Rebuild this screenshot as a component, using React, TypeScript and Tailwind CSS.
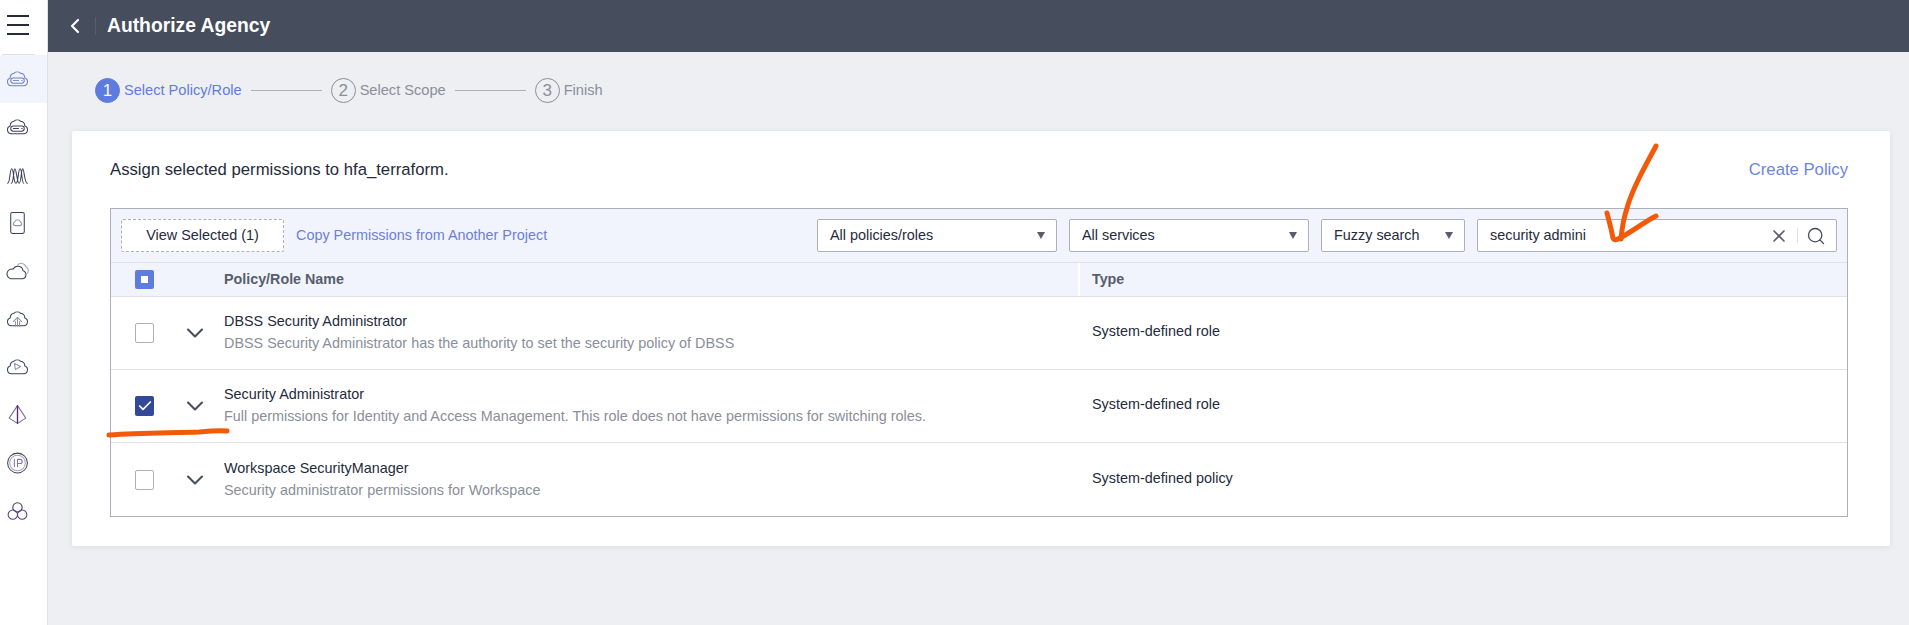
import React from 'react';
import { ChevronDown, ChevronLeft, Search, X, Check } from 'lucide-react';

const ink = '#3c4257';
const tint = '#7b8fd8';

const NavIcon: React.FC<{ children: React.ReactNode }> = ({ children }) => (
  <svg width="26" height="26" viewBox="0 0 24 24" fill="none" stroke={ink} strokeWidth="1" strokeLinecap="round" strokeLinejoin="round">
    {children}
  </svg>
);

const cloud = 'M6 18.5h12a3.8 3.8 0 0 0 1-7.4 4.6 4.6 0 0 0-4-4.6 4.8 4.8 0 0 0-6.5 0 4.6 4.6 0 0 0-3.500 4.600 3.800 3.800 0 0 0 1 7.400z';

const navIcons: React.ReactNode[] = [
  <NavIcon key="a">
    <path d={cloud} stroke="#6f7fc8" />
    <rect x="5.500" y="11" width="13" height="5" rx="2.500" stroke="#6f7fc8" />
    <path d="M8 13.500h5M16 13.500h.5" stroke={tint} />
  </NavIcon>,
  <NavIcon key="b">
    <path d={cloud} />
    <rect x="5.500" y="11" width="13" height="5" rx="2.500" />
    <path d="M8 13.500h5M16 13.500h.5" />
  </NavIcon>,
  <NavIcon key="c">
    <path d="M2.500 20c2.500 0 2-14 4-14s1.500 14 4 14 2-14 4-14 1.500 14 3.500 14M6 20c2.500 0 2-14 3.500-14s2 14 4 14 2-14 3.500-14 1.500 14 4.500 14" />
  </NavIcon>,
  <NavIcon key="d">
    <rect x="5.500" y="2" width="13" height="20" rx="1.500" />
    <path d="M9.500 14.500h5a1.800 1.800 0 0 0 .2-3.500 2.800 2.800 0 0 0-5.400 0 1.800 1.800 0 0 0 .2 3.500z" stroke="#8d93a5" />
  </NavIcon>,
  <NavIcon key="e">
    <path d="M5.500 19.500h11a4 4 0 0 0 .8-7.800 5 5 0 0 0-9.400-1.500 4.800 4.800 0 0 0-2.400 9.300z" />
    <path d="M12 6.500a4.500 4.500 0 0 1 8 1.500 4 4 0 0 1 2 5.500 4 4 0 0 1-3 2" stroke="#a5a9b8" />
  </NavIcon>,
  <NavIcon key="f">
    <path d={cloud} />
    <path d="M12 19v-7M8 14.500l4-4 4 4M10 19v-4.500M14 19v-4.500" stroke="#8d93a5" />
  </NavIcon>,
  <NavIcon key="g">
    <path d={cloud} />
    <path d="M9 8.500l6 3-5 3z" stroke="#8d93a5" />
  </NavIcon>,
  <NavIcon key="h">
    <path d="M12 3L4 15l8 5 8-5z" stroke="#7d6a9a" />
    <path d="M12 3v17" stroke="#5a2a6a" strokeWidth="1.300" />
  </NavIcon>,
  <NavIcon key="i">
    <circle cx="12" cy="12" r="9.500" />
    <circle cx="12" cy="12" r="7.500" stroke="#a5a9b8" />
    <path d="M9 8.500v7M12 15.500v-7h2.500a2 2 0 0 1 0 4H12" stroke="#8d6fb0" />
  </NavIcon>,
  <NavIcon key="j">
    <circle cx="12" cy="8.500" r="4.500" />
    <circle cx="7.500" cy="15.500" r="4.500" stroke="#5a3a7a" />
    <circle cx="16.500" cy="15.500" r="4.500" stroke="#5a3a7a" />
  </NavIcon>,
];

const rows = [
  {
    name: 'DBSS Security Administrator',
    desc: 'DBSS Security Administrator has the authority to set the security policy of DBSS',
    type: 'System-defined role',
    checked: false,
  },
  {
    name: 'Security Administrator',
    desc: 'Full permissions for Identity and Access Management. This role does not have permissions for switching roles.',
    type: 'System-defined role',
    checked: true,
  },
  {
    name: 'Workspace SecurityManager',
    desc: 'Security administrator permissions for Workspace',
    type: 'System-defined policy',
    checked: false,
  },
];

const Step: React.FC<{ n: number; label: string; active?: boolean }> = ({ n, label, active }) => (
  <div className="flex items-center gap-[4px]">
    <span
      className={
        active
          ? 'flex h-[25px] w-[25px] items-center justify-center rounded-full border border-[#5e7ce0] bg-[#5e7ce0] text-[17px] text-white'
          : 'flex h-[25px] w-[25px] items-center justify-center rounded-full border border-[#8a8e99] text-[17px] text-[#8a8e99]'
      }
    >
      {n}
    </span>
    <span className={active ? 'text-[14.600px] text-[#5e7ce0]' : 'text-[14.600px] text-[#8a8e99]'}>{label}</span>
  </div>
);

const Select: React.FC<{ label: string; width: string }> = ({ label, width }) => (
  <div className={`flex h-[33px] items-center justify-between rounded-[2px] border border-[#adb0b8] bg-white pl-[12px] pr-[11px] text-[14.400px] text-[#252b3a] ${width}`}>
    <span>{label}</span>
    <span className="h-0 w-0 border-x-[4px] border-t-[7px] border-x-transparent border-t-[#575d6c]" />
  </div>
);

const App: React.FC = () => {
  return (
    <div className="relative flex h-[625px] w-full overflow-hidden bg-[#eeeff3] font-['Liberation_Sans',Arial,sans-serif]">
      <aside className="flex w-[48px] shrink-0 flex-col border-r border-[#dfe1e6] bg-white">
        <div className="ml-[2px] flex h-[55px] w-[33px] flex-col justify-start gap-[7px] border-b border-[#dfe1e6] pl-[5px] pt-[15px]">
          <span className="h-[2px] w-[22px] bg-[#252b3a]" />
          <span className="h-[2px] w-[22px] bg-[#252b3a]" />
          <span className="h-[2px] w-[22px] bg-[#252b3a]" />
        </div>
        {navIcons.map((icon, i) => (
          <div
            key={i}
            className={i === 0 ? 'flex h-[48px] items-center justify-center bg-[#f1f4fc] pr-[17px] pl-[5px]' : 'flex h-[48px] items-center justify-center pr-[17px] pl-[5px]'}
          >
            {icon}
          </div>
        ))}
      </aside>

      <div className="flex min-w-0 flex-1 flex-col">
        <header className="flex h-[52px] shrink-0 items-center bg-[#464d5c] pl-[15px] text-white">
          <ChevronLeft size={24} strokeWidth={2.2} className="text-white" />
          <span className="ml-[8px] mr-[11px] h-[18px] w-px bg-[#575d6c]" />
          <h1 className="text-[19.300px] font-bold">Authorize Agency</h1>
        </header>

        <main className="flex flex-col pl-[24px] pr-[19px]">
          <div className="mb-[2px] flex h-[77px] items-center pl-[23px]">
            <Step n={1} label="Select Policy/Role" active />
            <span className="mx-[9px] h-px w-[71px] bg-[#adb0b8]" />
            <Step n={2} label="Select Scope" />
            <span className="mx-[9px] h-px w-[71px] bg-[#adb0b8]" />
            <Step n={3} label="Finish" />
          </div>

          <section className="rounded-[2px] bg-white pb-[29px] pl-[38px] pr-[42px] pt-[24px] shadow-[0_1px_6px_rgba(0,0,0,0.08)]">
            <div className="flex h-[40px] items-center justify-between pb-[10px]">
              <p className="text-[16.700px] text-[#252b3a]">Assign selected permissions to hfa_terraform.</p>
              <a className="text-[16.700px] text-[#6c85e0]">Create Policy</a>
            </div>
            <div className="mt-[13px] border border-[#adb0b8]">
              <div className="flex h-[53px] items-center bg-[#f1f4fc] pl-[10px] pr-[10px]">
                <button className="h-[33px] w-[163px] rounded-[2px] border border-dashed border-[#adb0b8] bg-white text-[14.400px] text-[#252b3a]">
                  View Selected (1)
                </button>
                <a className="ml-[12px] text-[14.400px] text-[#6c7fd8]">Copy Permissions from Another Project</a>
                <div className="ml-auto flex items-center gap-[12px]">
                  <Select label="All policies/roles" width="w-[240px]" />
                  <Select label="All services" width="w-[240px]" />
                  <Select label="Fuzzy search" width="w-[144px]" />
                  <div className="flex h-[33px] w-[360px] items-center rounded-[2px] border border-[#adb0b8] bg-white pl-[12px] pr-[10px] text-[14.400px] text-[#252b3a]">
                    <span className="flex-1">security admini</span>
                    <X size={20} strokeWidth={2} className="text-[#575d6c]" />
                    <span className="mx-[8px] h-[15px] w-px bg-[#dfe1e6]" />
                    <Search size={20} strokeWidth={1.6} className="text-[#464d5c]" />
                  </div>
                </div>
              </div>

              <div className="flex h-[35px] items-center border-y border-[#dfe1e6] bg-[#f1f4fc] text-[14.300px] font-bold text-[#575d6c]">
                <div className="flex w-[93px] shrink-0 pl-[24px]">
                  <span className="flex h-[19px] w-[19px] items-center justify-center rounded-[2px] bg-[#5e7ce0]">
                    <span className="h-[7px] w-[7px] bg-white" />
                  </span>
                </div>
                <div className="flex h-full flex-1 items-center border-r-2 border-white pl-[20px]">Policy/Role Name</div>
                <div className="w-[767px] shrink-0 pl-[12px]">Type</div>
              </div>

              {rows.map((row, i) => (
                <div key={row.name} className={i < rows.length - 1 ? 'flex h-[73px] items-center border-b border-[#dfe1e6]' : 'flex h-[73px] items-center'}>
                  <div className="flex w-[93px] shrink-0 items-center pl-[24px]">
                    <span className="flex h-[20px] w-[19px] shrink-0 items-center justify-center">
                      {row.checked ? (
                        <span className="flex h-[20px] w-[19px] items-center justify-center rounded-[2px] bg-[#344899]">
                          <Check size={16} strokeWidth={2.5} className="text-white" />
                        </span>
                      ) : (
                        <span className="h-[20px] w-[19px] rounded-[2px] border border-[#adb0b8] bg-white" />
                      )}
                    </span>
                    <ChevronDown size={28} strokeWidth={1.800} className="ml-[27px] shrink-0 text-[#464d5c]" />
                  </div>
                  <div className="flex-1 pb-[2px] pl-[20px]">
                    <div className="text-[14.400px] leading-[16px] text-[#252b3a]">{row.name}</div>
                    <div className="mt-[6px] text-[14.400px] leading-[16px] text-[#8a8e99]">{row.desc}</div>
                  </div>
                  <div className="w-[767px] shrink-0 pb-[2px] pl-[12px] text-[14.400px] text-[#252b3a]">{row.type}</div>
                </div>
              ))}
            </div>
          </section>
        </main>
      </div>

      {/* hand-drawn annotations on top of the screenshot */}
      <svg className="pointer-events-none absolute left-0 top-0" width="1909" height="625" fill="none" stroke="#f25a0a" strokeWidth="5" strokeLinecap="round" strokeLinejoin="round">
        <path d="M1656 146c-12 22-24 44-29 62-3 9-5 20-6 31" />
        <path d="M1607 213c2 8 4 14 6 25 1 2 3 2 5 1 14-7 26-17 38-23" />
        <path d="M109 435c30-2 60-2 90-3 10-1 20-2 28-1" />
      </svg>
    </div>
  );
};

export default App;
